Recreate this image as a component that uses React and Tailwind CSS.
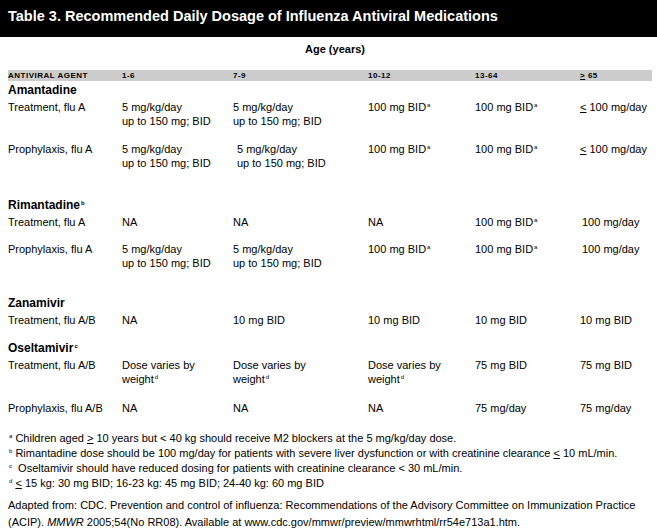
const sup = (t) => <span className="text-[6px] leading-none relative top-[-4px] ml-[1px]">{t}</span>;
const ge = <span className="underline underline-offset-1">&gt;</span>;
const le = <span className="underline underline-offset-1">&lt;</span>;

const cols = 'grid grid-cols-[114px_111px_135px_107px_105px_1fr]';

function Row({ cells, className = '' }) {
  return (
    <div className={`${cols} ${className}`}>
      {cells.map((c, i) => (
        <div key={i} className="leading-[14px]">{c}</div>
      ))}
    </div>
  );
}

function Agent({ children, className = '' }) {
  return <div className={`font-bold text-[12px] leading-[14px] ${className}`}>{children}</div>;
}

const dose = (
  <>
    5 mg/kg/day
    <br />
    up to 150 mg; BID
  </>
);

export default function App() {
  return (
    <div className="w-[657px] h-[531px] bg-white text-black font-['Liberation_Sans',Arial,sans-serif] text-[11px] overflow-hidden">
      {/* title band */}
      <div className="bg-black h-[37px] px-2 pt-[7px]">
        <h1 className="text-white font-bold text-[14.5px] leading-[18px]">
          Table 3. Recommended Daily Dosage of Influenza Antiviral Medications
        </h1>
      </div>

      <div className="pl-2 pr-[5px]">
        <div className="text-center font-bold text-[11px] pt-[4px] h-[33px] pl-[10px]">Age (years)</div>

        {/* header row */}
        <div className={`${cols} bg-[#cccccc] h-[11px] items-center text-[8px] font-bold tracking-[0.5px] uppercase`}>
          <div>Antiviral Agent</div>
          <div>1-6</div>
          <div>7-9</div>
          <div>10-12</div>
          <div>13-64</div>
          <div>{ge} 65</div>
        </div>

        {/* Amantadine */}
        <Agent className="mt-[2px]">Amantadine</Agent>
        <Row
          className="mt-[3px]"
          cells={['Treatment, flu A', dose, dose, <>100 mg BID{sup('a')}</>, <>100 mg BID{sup('a')}</>, <>{le} 100 mg/day</>]}
        />
        <Row
          className="mt-[14px]"
          cells={[
            'Prophylaxis, flu A',
            dose,
            <span className="pl-[4px] block">5 mg/kg/day<br />up to 150 mg; BID</span>,
            <>100 mg BID{sup('a')}</>,
            <>100 mg BID{sup('a')}</>,
            <>{le} 100 mg/day</>,
          ]}
        />

        {/* Rimantadine */}
        <Agent className="mt-[28px]">Rimantadine{sup('b')}</Agent>
        <Row
          className="mt-[3px]"
          cells={['Treatment, flu A', 'NA', 'NA', 'NA', <>100 mg BID{sup('a')}</>, <span className="pl-[2px]">100 mg/day</span>]}
        />
        <Row
          className="mt-[13px]"
          cells={[
            'Prophylaxis, flu A',
            dose,
            dose,
            <>100 mg BID{sup('a')}</>,
            <>100 mg BID{sup('a')}</>,
            <span className="pl-[2px]">100 mg/day</span>,
          ]}
        />

        {/* Zanamivir */}
        <Agent className="mt-[26px]">Zanamivir</Agent>
        <Row className="mt-[3px]" cells={['Treatment, flu A/B', 'NA', '10 mg BID', '10 mg BID', '10 mg BID', '10 mg BID']} />

        {/* Oseltamivir */}
        <Agent className="mt-[14px]">Oseltamivir{sup('c')}</Agent>
        <Row
          className="mt-[3px]"
          cells={[
            'Treatment, flu A/B',
            <>Dose varies by<br />weight{sup('d')}</>,
            <>Dose varies by<br />weight{sup('d')}</>,
            <>Dose varies by<br />weight{sup('d')}</>,
            '75 mg BID',
            '75 mg BID',
          ]}
        />
        <Row className="mt-[15px]" cells={['Prophylaxis, flu A/B', 'NA', 'NA', 'NA', '75 mg/day', '75 mg/day']} />

        {/* footnotes */}
        <div className="mt-[16px] leading-[15px] text-[11px]">
          <p>{sup('a')} Children aged {ge} 10 years but &lt; 40 kg should receive M2 blockers at the 5 mg/kg/day dose.</p>
          <p>{sup('b')} Rimantadine dose should be 100 mg/day for patients with severe liver dysfunction or with creatinine clearance {le} 10 mL/min.</p>
          <p>{sup('c')}&nbsp; Oseltamivir should have reduced dosing for patients with creatinine clearance &lt; 30 mL/min.</p>
          <p>{sup('d')} {le} 15 kg: 30 mg BID; 16-23 kg: 45 mg BID; 24-40 kg: 60 mg BID</p>
        </div>
        <div className="mt-[6px] leading-[17px] text-[11px]">
          <p>Adapted from: CDC. Prevention and control of influenza: Recommendations of the Advisory Committee on Immunization Practice</p>
          <p>(ACIP). <i>MMWR</i> 2005;54(No RR08). Available at www.cdc.gov/mmwr/preview/mmwrhtml/rr54e713a1.htm.</p>
        </div>
      </div>
    </div>
  );
}
